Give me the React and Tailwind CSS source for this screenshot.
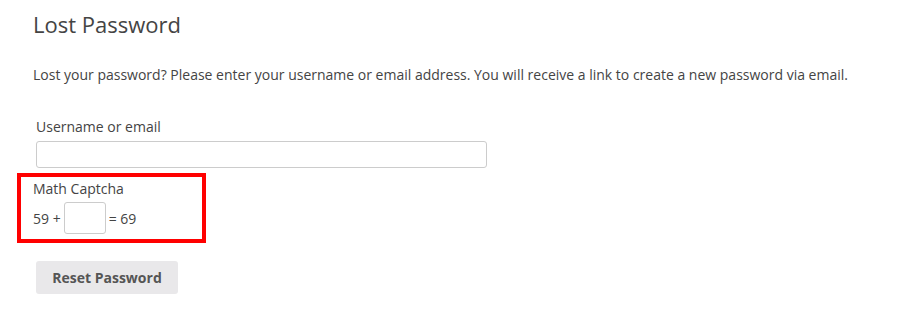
export default function App() {
  return (
    <div
      className="min-h-[309px] bg-white pl-[33px] pt-[8px] text-[#444]"
      style={{ fontFamily: '"Open Sans", sans-serif' }}
    >
      <h1 className="text-[22px] leading-[32px] text-[#444]">Lost Password</h1>
      <p className="mt-[25px] text-[14px] leading-[20px]">
        Lost your password? Please enter your username or email address. You will receive a link to create a new password via email.
      </p>

      <form className="mt-[32px]" onSubmit={(e) => e.preventDefault()}>
        <div className="ml-[3px]">
          <label className="block text-[14px] leading-[20px]">Username or email</label>
          <input
            type="text"
            className="mt-[4px] block h-[27px] w-[451px] rounded-[3px] border border-[#ccc] bg-white px-2 text-[14px] outline-none"
          />
        </div>

        <div className="-ml-[16px] mt-[5px] w-[189px] border-4 border-[#f00] pb-[5px] pl-[12px] pt-[2px]">
          <div className="text-[14px] leading-[20px]">Math Captcha</div>
          <div className="mt-[3px] flex items-center gap-[3px] text-[14px]">
            <span>59 +</span>
            <input
              type="text"
              className="h-[32px] w-[42px] rounded-[3px] border border-[#ccc] bg-white px-1 text-[14px] outline-none"
            />
            <span>= 69</span>
          </div>
        </div>

        <button
          type="submit"
          className="ml-[3px] mt-[18px] h-[33px] w-[142px] rounded-[3px] bg-[#e9e8ea] text-[14px] font-bold text-[#555]"
        >
          Reset Password
        </button>
      </form>
    </div>
  );
}
